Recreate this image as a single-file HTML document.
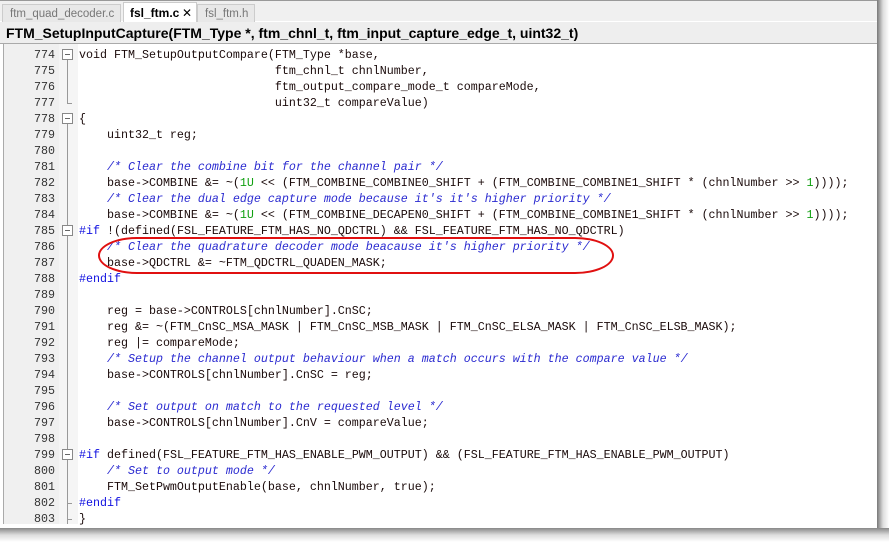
<!DOCTYPE html>
<html><head><meta charset="utf-8"><style>
body{margin:0;width:889px;height:542px;background:#fff;position:relative;overflow:hidden;font-family:"Liberation Sans",sans-serif}
#tabs{position:absolute;left:0;top:0;width:877px;height:22px;background:#f0f0f0;border-top:1px solid #999;box-sizing:border-box;border-bottom:1px solid #fff}
.tab{position:absolute;top:3px;height:19px;font-size:11.5px;line-height:18px;color:#777;background:#e8e8e8;border:1px solid #ccc;border-bottom:none;box-sizing:border-box;padding-left:7px;white-space:nowrap;overflow:hidden}
#func{position:absolute;left:0;top:22px;width:877px;height:22px;background:#eeeeee;border-bottom:1px solid #aaa;box-sizing:border-box;font-size:14px;font-weight:bold;line-height:22px;padding-left:6px;color:#000}
#gut{position:absolute;left:3px;top:44px;width:55px;height:480px;background:#f0f0f0;border-left:1px solid #aaa}
#fold{position:absolute;left:59px;top:44px;width:19px;height:480px;background:#f5f5f5}
.ln{position:absolute;left:0;width:55px;text-align:right;font-family:"Liberation Mono",monospace;font-size:11.67px;color:#333;line-height:16px}
.cl{position:absolute;left:79px;font-family:"Liberation Mono",monospace;font-size:11.67px;color:#1a0a0a;line-height:16px;white-space:pre}
.c{color:#2a2ad0;font-style:italic}.k{color:#1010e0}.n{color:#10a010}
.box{position:absolute;left:62px;width:9px;height:9px;border:1px solid #888;background:#fff}
.box:after{content:"";position:absolute;left:2px;top:4px;width:5px;height:1px;background:#666}
.vl{position:absolute;left:67px;width:1px;background:#999}
.hl{position:absolute;left:67px;width:5px;height:1px;background:#999}
#edge{position:absolute;left:877px;top:0;width:12px;height:542px;background:linear-gradient(90deg,#777,#ddd 50%,#fff)}
#bot{position:absolute;left:0;top:528px;width:889px;height:14px;background:linear-gradient(#888,#ddd 50%,#fff)}
</style></head><body>
<div id="tabs">
<div class="tab" style="left:2px;width:119px">ftm_quad_decoder.c</div>
<div class="tab" style="left:123px;width:74px;background:#fff;color:#000;font-weight:bold;top:1px;height:21px;line-height:20px;font-size:12px;padding-left:6px">fsl_ftm.c<span style="position:absolute;left:58px;font-weight:normal">✕</span></div>
<div class="tab" style="left:197px;width:58px">fsl_ftm.h</div>
</div>
<div id="func">FTM_SetupInputCapture(FTM_Type *, ftm_chnl_t, ftm_input_capture_edge_t, uint32_t)</div>
<div id="gut"></div><div id="fold"></div>
<div id="lines"></div>
<div class="vl" style="top:56px;height:48px"></div><div class="hl" style="top:103px"></div>
<div class="vl" style="top:124px;height:400px"></div>
<div class="hl" style="top:503px"></div><div class="hl" style="top:519px"></div>
<div class="box" style="top:49px"></div><div class="box" style="top:113px"></div>
<div class="box" style="top:225px"></div><div class="box" style="top:449px"></div>
<div style="position:absolute;left:98px;top:237px;width:516px;height:37px;border:2px solid #e01010;border-radius:40px/19px;box-sizing:border-box"></div>
<div id="edge"></div><div id="bot"></div>
<script>
var L=[
'void FTM_SetupOutputCompare(FTM_Type *base,',
'                            ftm_chnl_t chnlNumber,',
'                            ftm_output_compare_mode_t compareMode,',
'                            uint32_t compareValue)',
'{',
'    uint32_t reg;',
'',
'    <span class="c">/* Clear the combine bit for the channel pair */</span>',
'    base->COMBINE &amp;= ~(<span class="n">1U</span> &lt;&lt; (FTM_COMBINE_COMBINE0_SHIFT + (FTM_COMBINE_COMBINE1_SHIFT * (chnlNumber &gt;&gt; <span class="n">1</span>))));',
'    <span class="c">/* Clear the dual edge capture mode because it\'s it\'s higher priority */</span>',
'    base->COMBINE &amp;= ~(<span class="n">1U</span> &lt;&lt; (FTM_COMBINE_DECAPEN0_SHIFT + (FTM_COMBINE_COMBINE1_SHIFT * (chnlNumber &gt;&gt; <span class="n">1</span>))));',
'<span class="k">#if</span> !(defined(FSL_FEATURE_FTM_HAS_NO_QDCTRL) &amp;&amp; FSL_FEATURE_FTM_HAS_NO_QDCTRL)',
'    <span class="c">/* Clear the quadrature decoder mode beacause it\'s higher priority */</span>',
'    base->QDCTRL &amp;= ~FTM_QDCTRL_QUADEN_MASK;',
'<span class="k">#endif</span>',
'',
'    reg = base->CONTROLS[chnlNumber].CnSC;',
'    reg &amp;= ~(FTM_CnSC_MSA_MASK | FTM_CnSC_MSB_MASK | FTM_CnSC_ELSA_MASK | FTM_CnSC_ELSB_MASK);',
'    reg |= compareMode;',
'    <span class="c">/* Setup the channel output behaviour when a match occurs with the compare value */</span>',
'    base->CONTROLS[chnlNumber].CnSC = reg;',
'',
'    <span class="c">/* Set output on match to the requested level */</span>',
'    base->CONTROLS[chnlNumber].CnV = compareValue;',
'',
'<span class="k">#if</span> defined(FSL_FEATURE_FTM_HAS_ENABLE_PWM_OUTPUT) &amp;&amp; (FSL_FEATURE_FTM_HAS_ENABLE_PWM_OUTPUT)',
'    <span class="c">/* Set to output mode */</span>',
'    FTM_SetPwmOutputEnable(base, chnlNumber, true);',
'<span class="k">#endif</span>',
'}',
''];
var h='';
for(var i=0;i<L.length;i++){var y=47+i*16;
h+='<div class="ln" style="top:'+y+'px">'+(774+i)+'</div><div class="cl" style="top:'+y+'px">'+L[i]+'</div>';}
document.getElementById('lines').innerHTML=h;
</script>
</body></html>
